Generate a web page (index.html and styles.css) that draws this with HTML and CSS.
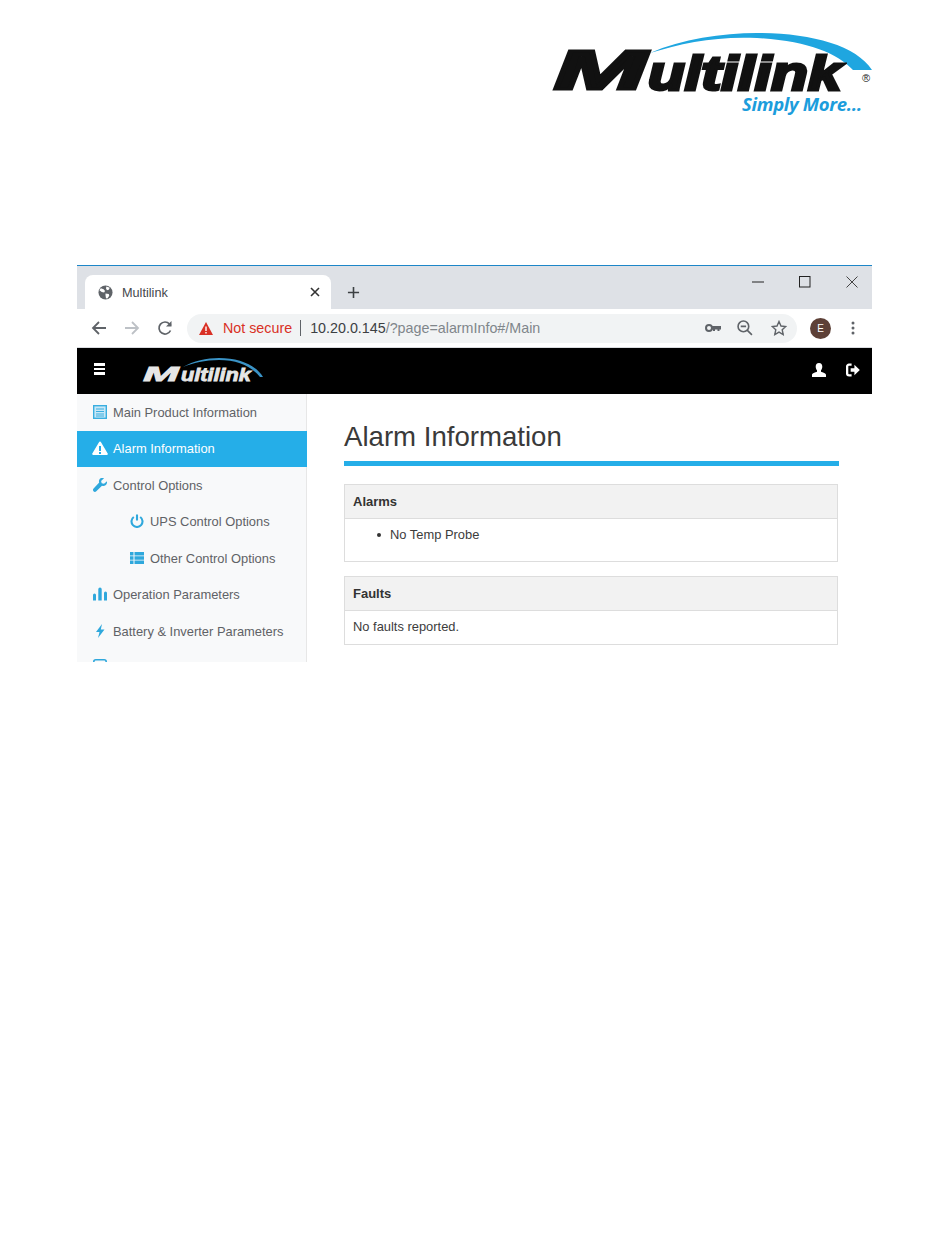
FILE: index.html
```html
<!DOCTYPE html>
<html lang="en">
<head>
<meta charset="utf-8">
<title>Multilink</title>
<link rel="stylesheet" href="styles.css">
</head>
<body>
<div class="page">
  <header class="doc-head">
    <div class="logo">
      <svg class="swoosh" viewBox="0 0 320 60" aria-hidden="true"><path d="M98 22C130 8 170 2 205 2C258 2 304 14 320 39L301 39C285 22 255 10 205 7C165 5 130 12 98 22Z" fill="#1fa6e0"/></svg>
      <span class="logo-word logo-cap">M</span>
      <span class="logo-word logo-rest">ultilink</span>
      <span class="logo-reg">®</span>
      <span class="logo-tag">Simply More…</span>
    </div>
  </header>
  <section class="shot">
    <div class="tabstrip">
      <div class="tab">
        <svg class="globe" viewBox="0 0 16 16"><circle cx="8" cy="8" r="7.5" fill="#5f6368"/><path d="M3 3.500l3 1 1.500 2-1 1.500-2.500-.5-2.500-2zM9 1.500l3.500 1.500-1 2-2 .5-1-2zM8 9l3.500.5.500 2-2 3-1.500-.5-.5-3z" fill="#fff"/></svg>
        <span class="tab-title">Multilink</span>
        <svg class="tab-x" viewBox="0 0 10 10"><path d="M1 1l8 8M9 1l-8 8" stroke="#333" stroke-width="1.600" fill="none"/></svg>
      </div>
      <svg class="newtab" viewBox="0 0 14 14"><path d="M7 1v12M1 7h12" stroke="#3c4043" stroke-width="1.700" fill="none"/></svg>
      <div class="winctl">
        <svg viewBox="0 0 12 12"><path d="M0 6h12" stroke="#222" fill="none"/></svg>
        <svg viewBox="0 0 12 12"><rect x=".5" y=".5" width="10.500" height="10.500" stroke="#222" fill="none"/></svg>
        <svg viewBox="0 0 12 12"><path d="M.5.500l11 11M11.500.500l-11 11" stroke="#444" fill="none"/></svg>
      </div>
    </div>
    <div class="toolbar">
      <svg class="tb" viewBox="0 0 16 16"><path d="M15 8H2M8 2L2 8l6 6" stroke="#5f6368" stroke-width="1.800" fill="none"/></svg>
      <svg class="tb" viewBox="0 0 16 16"><path d="M1 8h13M8 2l6 6-6 6" stroke="#bdc1c6" stroke-width="1.800" fill="none"/></svg>
      <svg class="tb" viewBox="0 0 16 16"><path d="M13.500 10.500A6 6 0 1 1 12.500 4L14 5.500" stroke="#5f6368" stroke-width="1.700" fill="none"/><path d="M14.500 1v5.500H9z" fill="#5f6368"/></svg>
      <div class="omnibox">
        <svg class="warn" viewBox="0 0 14 13"><path d="M7 0l7 13H0z" fill="#d93025"/><path d="M6.300 4.500h1.400v4.500H6.300zM6.300 10h1.400v1.400H6.300z" fill="#fff"/></svg>
        <span class="notsec">Not secure</span>
        <span class="omni-sep"></span>
        <span class="url"><span class="url-host">10.20.0.145</span>/?page=alarmInfo#/Main</span>
        <span class="omni-icons">
          <svg class="omni-key" viewBox="0 0 16 10"><circle cx="4" cy="5" r="3" stroke="#5f6368" stroke-width="2" fill="none"/><path d="M7 3h9v3.500h-1.500V8h-2V6.500H10V8H8V6.500H7z" fill="#5f6368"/></svg>
          <svg viewBox="0 0 15 15"><circle cx="6" cy="6" r="5" stroke="#5f6368" stroke-width="1.500" fill="none"/><path d="M9.500 9.500L14 14M3.500 6h5" stroke="#5f6368" stroke-width="1.500" fill="none"/></svg>
          <svg viewBox="0 0 16 16"><path d="M8 1.500l2 4.500 4.800.500-3.600 3.200 1 4.800L8 12.100l-4.200 2.400 1-4.800L1.200 6.500 6 6z" stroke="#5f6368" stroke-width="1.400" fill="none"/></svg>
        </span>
      </div>
      <span class="avatar">E</span>
      <svg class="kebab" viewBox="0 0 4 14"><circle cx="2" cy="2" r="1.500"/><circle cx="2" cy="7" r="1.500"/><circle cx="2" cy="12" r="1.500"/></svg>
    </div>
    <nav class="appbar">
      <span class="burger"><i></i><i></i><i></i></span>
      <div class="app-logo">
        <svg class="app-swoosh" viewBox="0 0 120 24" aria-hidden="true"><path d="M40 9C50 3 64 0 76 0C96 0 113 7 120 19L117 19C108 8 94 2 76 2C62 2 50 5 40 9Z" fill="#3a93c6"/></svg>
        <span class="app-word app-cap">M</span>
        <span class="app-word app-rest">ultilink</span>
      </div>
      <span class="app-icons">
        <svg viewBox="0 0 14 14"><path d="M7 0c2.300 0 3.300 1.700 3.300 3.700 0 1.500-.7 2.900-1.300 3.600v1.400c1.500.8 5 1.300 5 3.300v2H0v-2c0-2 3.500-2.500 5-3.300V7.300C4.400 6.600 3.700 5.200 3.700 3.700 3.700 1.700 4.700 0 7 0z" fill="#fff"/></svg>
        <svg viewBox="0 0 15 14"><path d="M6 1.300H3.200a2 2 0 0 0-2 2v7.400a2 2 0 0 0 2 2H6" stroke="#fff" stroke-width="2.500" fill="none"/><path d="M5 5h4V1.500L14.800 7 9 12.500V9H5z" fill="#fff"/></svg>
      </span>
    </nav>
    <div class="app-body">
      <aside class="sidebar">
        <a class="item"><svg class="ic" viewBox="0 0 14 14"><rect x=".7" y=".7" width="12.600" height="12.600" stroke="#3aaee0" stroke-width="1.400" fill="#c9e8f7"/><path d="M3 4h8M3 6.500h8M3 9h8M3 11h8" stroke="#3aaee0" stroke-width="1.100"/></svg>Main Product Information</a>
        <a class="item active"><svg class="ic ic-lg" viewBox="0 0 16 14"><path d="M8 .5c.5 0 .8.300 1 .7l6.700 11.300c.4.700 0 1.500-.8 1.500H1.100c-.8 0-1.200-.8-.8-1.500L7 1.200c.2-.4.500-.7 1-.7z" fill="#fff"/><path d="M7 5h2v5H7zM7 11h2v2H7z" fill="#25aee8"/></svg>Alarm Information</a>
        <a class="item"><svg class="ic" viewBox="0 0 14 14"><path d="M14 3.200l-3 2.600-2.300-.6-.6-2.200L11 .3C9.100-.4 7-.2 6.200 2c-.4 1-.3 1.900 0 2.600L.6 10.500c-.9.900-.8 2-.1 2.800.8.800 2 .8 2.800-.1L9 7.800c2.100.6 4.200-.1 4.800-2.200.2-.8.300-1.600.2-2.400z" fill="#2fa8dc"/></svg>Control Options</a>
        <a class="item sub"><svg class="ic" viewBox="0 0 14 14"><path d="M3.800 3a5.500 5.500 0 1 0 6.400 0" stroke="#2fa8dc" stroke-width="2.100" fill="none"/><path d="M7 .5v6" stroke="#2fa8dc" stroke-width="2.100"/></svg>UPS Control Options</a>
        <a class="item sub"><svg class="ic" viewBox="0 0 14 14"><path d="M0 1h3.500v3.400H0zM4.500 1H14v3.400H4.500zM0 5.300h3.500v3.400H0zM4.500 5.300H14v3.400H4.500zM0 9.600h3.500V13H0zM4.500 9.600H14V13H4.500z" fill="#2fa8dc"/></svg>Other Control Options</a>
        <a class="item"><svg class="ic" viewBox="0 0 14 14"><path d="M1.500 6.500a1.500 1.500 0 0 1 1.500 1.500v5.500H0V8a1.500 1.500 0 0 1 1.500-1.500zM7 .5A1.700 1.700 0 0 1 8.700 2.200v11.300H5.300V2.200A1.700 1.700 0 0 1 7 .5zM12.500 4.500A1.500 1.500 0 0 1 14 6v7.500h-3V6a1.500 1.500 0 0 1 1.500-1.500z" fill="#2fa8dc"/></svg>Operation Parameters</a>
        <a class="item"><svg class="ic" viewBox="0 0 14 14"><path d="M9 0L3 8h3.500L5 14l6.500-8.500H7.800z" fill="#2fa8dc"/></svg>Battery &amp; Inverter Parameters</a>
        <a class="item item-last"><svg class="ic" viewBox="0 0 14 14"><rect x=".8" y=".8" width="12.400" height="12.400" rx="2" stroke="#2fa8dc" stroke-width="1.600" fill="none"/></svg>Battery Test</a>
      </aside>
      <main class="content">
        <h1 class="title">Alarm Information</h1>
        <div class="panel">
          <div class="panel-head">Alarms</div>
          <div class="panel-body"><ul class="list"><li>No Temp Probe</li></ul></div>
        </div>
        <div class="panel">
          <div class="panel-head">Faults</div>
          <div class="panel-body plain">No faults reported.</div>
        </div>
      </main>
    </div>
  </section>
</div>
</body>
</html>
```
FILE: styles.css
```css
* { box-sizing: border-box; }
html, body { margin: 0; background: #fff; }
body { font-family: "Liberation Sans", Arial, sans-serif; color: #333; }
.page { width: 950px; height: 1241px; overflow: hidden; padding: 0 78px 0 77px; }

.doc-head { height: 265px; display: flex; justify-content: flex-end; }
.logo { position: relative; width: 320px; height: 90px; margin-top: 31px; }
.swoosh { position: absolute; left: 0; top: 0; width: 320px; height: 60px; }
.logo-word { position: absolute; font-family: "Liberation Sans", sans-serif; font-style: italic; font-weight: 700; color: #111; -webkit-text-stroke: 3px #111; transform-origin: 0 100%; white-space: nowrap; }
.logo-cap { left: 2px; top: 11px; font-size: 56px; line-height: 56px; transform: scaleX(1.980); }
.logo-rest { left: 96px; top: 23px; font-size: 48px; line-height: 40px; transform: scaleX(1.250); }
.logo-reg { position: absolute; right: 2px; top: 41px; font-size: 11px; line-height: 12px; color: #222; }
.logo-tag { position: absolute; left: 190px; top: 63px; font: italic 700 18.500px/20px "Open Sans", sans-serif; color: #1c9ddc; letter-spacing: -.3px; white-space: nowrap; }

.shot { height: 397px; overflow: hidden; border-top: 1px solid #1c86c8; display: flex; flex-direction: column; }

.tabstrip { height: 43px; flex: none; background: #dee1e6; display: flex; align-items: flex-end; padding-left: 8px; position: relative; }
.tab { width: 246px; height: 34px; background: #fff; border-radius: 8px 8px 0 0; display: flex; align-items: center; padding: 0 11px 0 13px; }
.globe { width: 15px; height: 15px; margin-right: 9px; }
.tab-title { flex: 1; font-size: 12.700px; padding-top: 1px; color: #45484c; }
.tab-x { width: 10px; height: 10px; }
.newtab { width: 13px; height: 13px; margin: 0 0 10px 16px; }
.winctl { position: absolute; right: 14px; top: 10px; display: flex; gap: 35px; }
.winctl svg { width: 12px; height: 12px; }

.toolbar { height: 39px; flex: none; background: #fff; display: flex; align-items: center; padding-left: 14px; border-bottom: 1px solid #dadce0; }
.tb { width: 16px; height: 16px; margin-right: 17px; }
.omnibox { width: 610px; height: 29px; margin-left: -3px; border-radius: 15px; background: #f1f3f4; display: flex; align-items: center; padding: 0 10px 0 12px; font-size: 14.300px; }
.warn { width: 14px; height: 13px; margin-right: 10px; }
.notsec { color: #d93025; }
.omni-sep { width: 1px; height: 16px; background: #5f6368; margin: 0 9px 0 8px; }
.url { flex: 1; color: #80868b; white-space: nowrap; }
.url-host { color: #3c4043; }
.omni-icons { display: flex; align-items: center; gap: 18px; }
.omni-icons svg { width: 16px; height: 16px; }
.omni-icons .omni-key { margin-right: -2px; }
.avatar { width: 21px; height: 21px; margin-left: 13px; border-radius: 50%; background: #5d4037; color: #fff; font-size: 10px; display: flex; align-items: center; justify-content: center; }
.kebab { width: 4px; height: 14px; margin-left: 20px; fill: #5f6368; }

.appbar { height: 46px; flex: none; background: #000; display: flex; align-items: center; padding: 0 12px 0 17px; }
.burger { width: 11px; display: flex; flex-direction: column; gap: 2px; margin: -4px 0 0 0; }
.burger i { display: block; height: 2.500px; background: #fff; }
.app-logo { position: relative; width: 120px; height: 26px; margin-left: 38px; }
.app-swoosh { position: absolute; left: 0; top: 0; width: 120px; height: 24px; }
.app-word { position: absolute; font-family: "Liberation Sans", sans-serif; font-style: italic; font-weight: 700; color: #e6e6e6; -webkit-text-stroke: .8px #e6e6e6; transform-origin: 0 100%; white-space: nowrap; }
.app-cap { left: 0; top: 5px; font-size: 21px; line-height: 21px; transform: scaleX(2.050); }
.app-rest { left: 38px; top: 8px; font-size: 17.500px; line-height: 18px; transform: scaleX(1.240); }
.app-icons { margin-left: auto; margin-top: -2px; display: flex; align-items: center; gap: 20px; }
.app-icons svg { width: 14px; height: 14px; }

.app-body { flex: 1; display: flex; min-height: 0; }
.sidebar { width: 230px; flex: none; background: #f8f9fa; border-right: 1px solid #e7e7e7; }
.item { height: 36.500px; display: flex; align-items: center; padding-left: 16px; font-size: 12.900px; color: #5f6266; white-space: nowrap; }
.item.active { background: #25aee8; color: #fff; margin-right: -1px; }
.item.sub { padding-left: 53px; }
.item-last { margin-top: -1.500px; }
.ic { width: 14px; height: 14px; margin: -1px 6px 0 0; flex: none; }
.ic-lg { width: 16px; height: 14px; margin: -2px 5px 0 -1px; }

.content { flex: 1; min-width: 0; padding: 24px 33px 0 37px; }
.title { margin: 0; padding-bottom: 8px; height: 48px; padding-top: 1px; font-size: 27.600px; line-height: 36px; font-weight: 400; color: #3a3a3a; border-bottom: 5px solid #25aee8; }
.panel { width: 494px; border: 1px solid #ddd; margin-top: 18px; background: #fff; }
.panel + .panel { margin-top: 14px; }
.panel-head { height: 34px; padding: 0 8px; display: flex; align-items: center; font-size: 13px; font-weight: 700; background: #f2f2f2; border-bottom: 1px solid #ddd; color: #333; }
.panel-body { min-height: 42px; font-size: 12.900px; color: #3c3c3c; }
.panel-body.plain { min-height: 33px; padding: 7px 8px; line-height: 17px; }
.list { margin: 0; padding: 7px 0 0 32px; line-height: 17px; list-style: none; }
.list li { display: flex; align-items: center; }
.list li::before { content: ""; width: 4px; height: 4px; border-radius: 50%; background: #333; margin-right: 9px; }
```
